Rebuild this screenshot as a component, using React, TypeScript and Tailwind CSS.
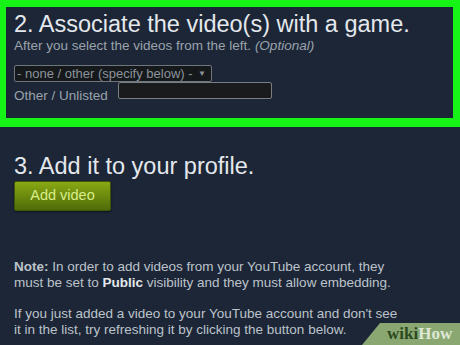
import React from "react";

export default function App() {
  return (
    <div
      className="relative w-[460px] h-[345px] overflow-hidden bg-[#1c2637]"
      style={{ fontFamily: '"Liberation Sans", Arial, sans-serif' }}
    >
      <div className="h-[127px] border-[7px] border-l-[6px] border-b-[9px] border-[#16f316] pl-[8px] pt-[4px]">
        <h2 className="text-[23.5px] leading-[27px] text-[#e4e8ec] whitespace-nowrap">
          2. Associate the video(s) with a game.
        </h2>
        <p className="text-[13.5px] leading-[16px] text-[#9aa3ab] whitespace-nowrap">
          After you select the videos from the left. <i>(Optional)</i>
        </p>
        <div className="mt-[11px] flex">
          <div className="h-[17px] w-[198px] flex items-center justify-between rounded-[2px] border border-[#6f757b] bg-[#16191c] pl-[2px] pr-[5px] text-[13px] leading-[15px] text-[#8b939b] whitespace-nowrap">
            <span>- none / other (specify below) -</span>
            <span className="text-[8px] leading-[8px]">▼</span>
          </div>
        </div>
        <div className="flex items-start">
          <span className="mt-[6px] text-[13.5px] leading-[16px] text-[#9aa3ab] whitespace-nowrap">
            Other / Unlisted
          </span>
          <div className="ml-[10px] h-[17px] w-[154px] rounded-[2px] border border-[#7a7f84] bg-[#1a1b1d]" />
        </div>
      </div>

      <div className="pl-[14px]">
        <h2 className="mt-[26px] text-[23.5px] leading-[27px] text-[#e4e8ec] whitespace-nowrap">
          3. Add it to your profile.
        </h2>
        <button className="mt-[1px] h-[30px] w-[97px] rounded-[2px] border border-[#3f5608] bg-gradient-to-b from-[#8aa812] to-[#4f6c0a] text-[14.5px] text-[#d8ee8a] shadow-[0_1px_2px_rgba(0,0,0,0.5)]">
          Add video
        </button>

        <div className="mt-[48px] text-[13.5px] leading-[16px] text-[#bcc3ca] whitespace-nowrap">
          <p>
            <b>Note:</b> In order to add videos from your YouTube account, they
            <br />
            must be set to <b className="text-[#e4e8ec]">Public</b> visibility and they must allow embedding.
          </p>
          <p className="mt-[15px]">
            If you just added a video to your YouTube account and don't see
            <br />
            it in the list, try refreshing it by clicking the button below.
          </p>
        </div>
      </div>

      <div className="absolute right-0 bottom-0 w-[98px] h-[22px]">
        <svg className="absolute inset-0" width="98" height="22" viewBox="0 0 98 22">
          <polygon points="18,0 98,0 98,22 0,22" fill="#8aa772" />
        </svg>
        <div
          className="absolute left-[25px] top-[1px] text-[17px] leading-[20px] font-bold whitespace-nowrap"
          style={{ fontFamily: '"Liberation Serif", "Times New Roman", serif' }}
        >
          <span className="text-[#2c4a20]">wiki</span>
          <span className="text-[#dfe8d6]">How</span>
        </div>
      </div>
    </div>
  );
}
